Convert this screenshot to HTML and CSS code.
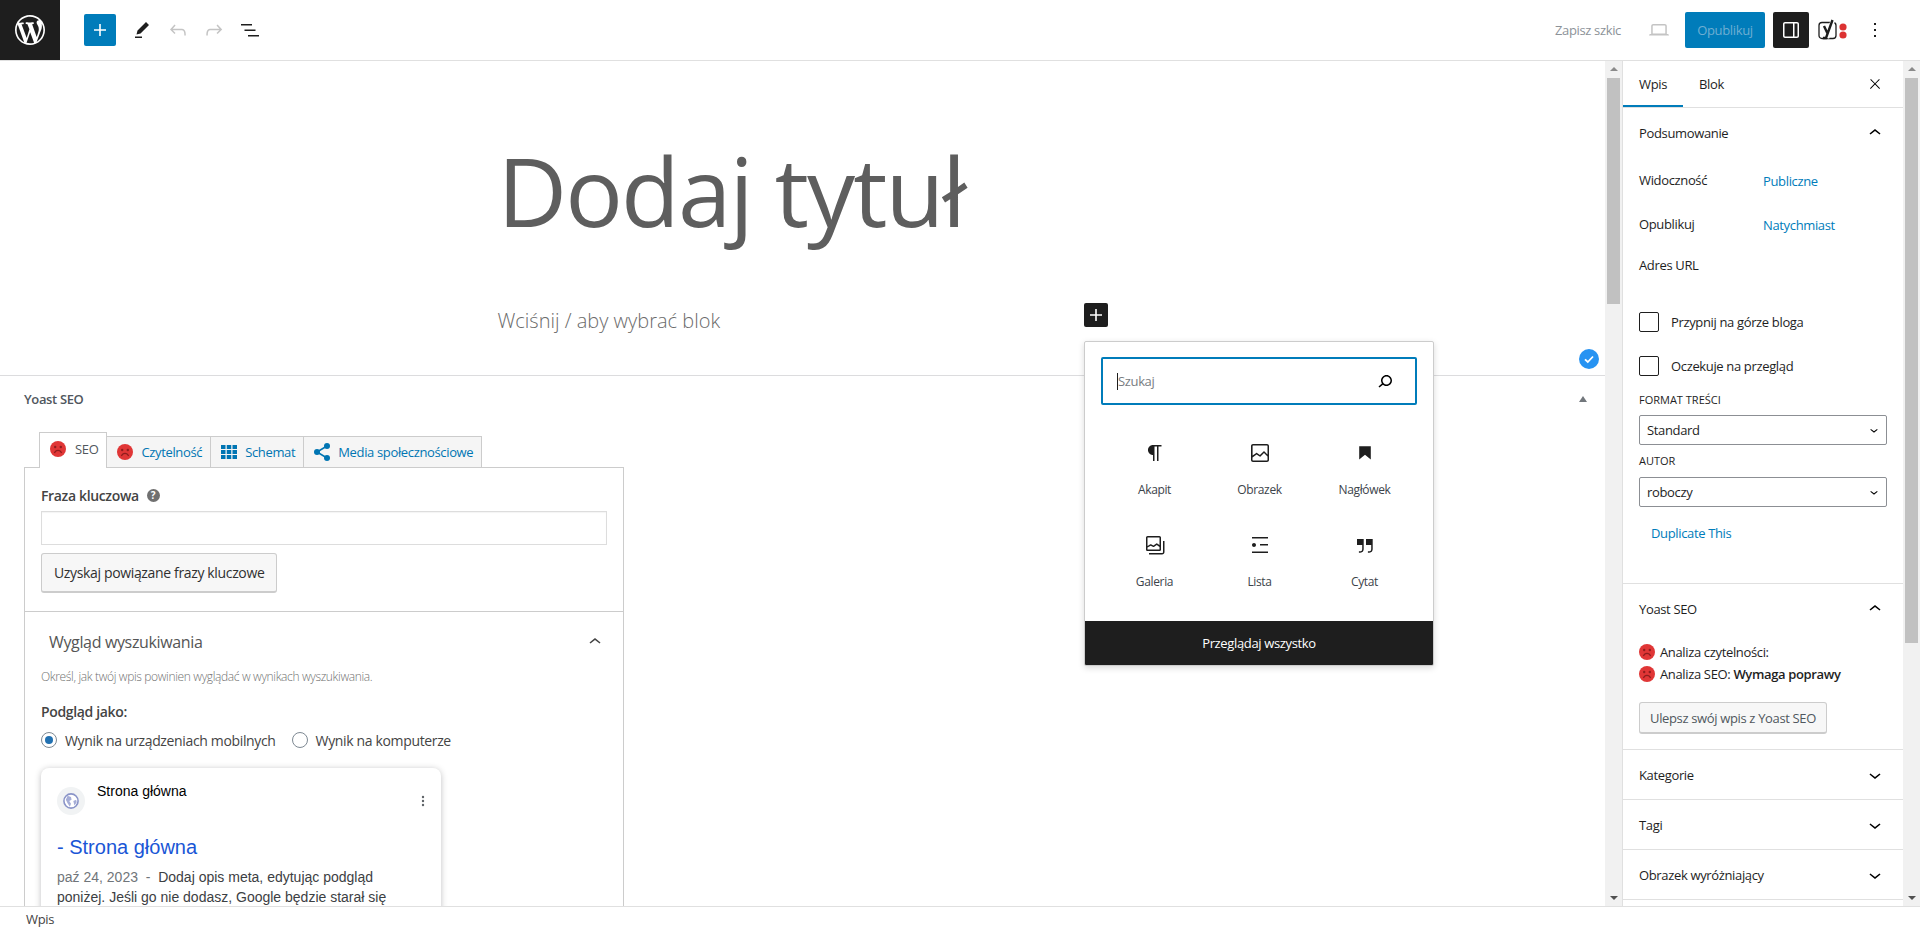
FILE: index.html
```html
<!DOCTYPE html>
<html lang="pl">

<head>
    <meta charset="utf-8">
    <title>Dodaj nowy wpis</title>
    <link rel="stylesheet" href="styles.css">
</head>

<body>
    <header class="topbar">
        <a class="logo">
            <svg width="36" height="36" viewBox="-2 -2 24 24" fill="#fff"><path d="M20 10c0-5.51-4.49-10-10-10C4.48 0 0 4.49 0 10c0 5.52 4.48 10 10 10 5.51 0 10-4.48 10-10zM7.78 15.37L4.37 6.22c.55-.02 1.17-.08 1.17-.08.5-.06.44-1.13-.06-1.11 0 0-1.45.11-2.37.11-.18 0-.37 0-.58-.01C4.12 2.69 6.87 1.11 10 1.11c2.33 0 4.45.87 6.05 2.34-.68-.11-1.65.39-1.65 1.58 0 .74.45 1.36.9 2.1.35.61.55 1.36.55 2.46 0 1.49-1.4 5-1.4 5l-3.03-8.37c.54-.02.82-.17.82-.17.5-.05.44-1.25-.06-1.22 0 0-1.44.12-2.38.12-.87 0-2.33-.12-2.33-.12-.5-.03-.56 1.2-.06 1.22l.92.08 1.26 3.41zM17.41 10c.24-.64.74-1.87.43-4.25.7 1.29 1.05 2.71 1.05 4.25 0 3.29-1.73 6.24-4.4 7.78.97-2.59 1.94-5.2 2.92-7.78zM6.1 18.09C3.12 16.65 1.11 13.53 1.11 10c0-1.3.23-2.48.72-3.59C3.25 10.3 4.67 14.2 6.1 18.09zm4.03-6.63l2.58 6.98c-.86.29-1.76.45-2.71.45-.79 0-1.57-.11-2.29-.33.81-2.38 1.62-4.74 2.42-7.1z"/></svg>
        </a>
        <div class="tools">
            <a class="btn-add"><svg width="24" height="24" viewBox="0 0 24 24" fill="#fff"><path d="M18 11.2h-5.2V6h-1.6v5.2H6v1.6h5.2V18h1.6v-5.2H18z"/></svg></a>
            <a class="tool"><svg width="24" height="24" viewBox="0 0 24 24"><path d="m19 7-3-3-8.500 8.500-1 4 4-1L19 7Zm-7 11.500H5V20h7v-1.500Z"/></svg></a>
            <a class="tool off"><svg width="24" height="24" viewBox="0 0 24 24"><path d="M18.3 11.7c-.6-.6-1.4-.9-2.3-.9H6.7l2.9-3.3-1.1-1-4.500 5L8.500 16l1-1-2.700-2.700H16c.5 0 .9.2 1.3.5 1 1 1 3.400 1 4.500v.3h1.500v-.2c0-1.500 0-4.300-1.500-5.700z"/></svg></a>
            <a class="tool off"><svg width="24" height="24" viewBox="0 0 24 24"><path d="M15.6 6.500l-1.100 1 2.900 3.300H8c-.9 0-1.700.3-2.300.9-1.400 1.500-1.400 4.200-1.400 5.600v.2h1.500v-.3c0-1.100 0-3.500 1-4.500.3-.3.7-.5 1.300-.5h9.200L14.500 15l1.100 1.100 4.600-4.600-4.600-5z"/></svg></a>
            <a class="tool"><svg width="24" height="24" viewBox="0 0 24 24"><path d="M3 6h11v1.500H3V6zm3.500 5.500h11V13h-11v-1.500zM21 17H10v1.500h11V17z"/></svg></a>
        </div>
        <div class="actions">
            <span class="save-draft">Zapisz szkic</span>
            <a class="tool off preview"><svg width="24" height="24" viewBox="0 0 24 24"><path d="M20.500 16h-.7V8c0-1.100-.9-2-2-2H6.200c-1.100 0-2 .9-2 2v8h-.7c-.8 0-1.500.7-1.500 1.500h20c0-.8-.7-1.500-1.500-1.500zM5.700 8c0-.3.2-.5.5-.5h11.600c.3 0 .5.2.5.5v7.600H5.700V8z"/></svg></a>
            <a class="btn-publish">Opublikuj</a>
            <a class="btn-panel"><svg width="24" height="24" viewBox="0 0 24 24" fill="#fff"><path fill-rule="evenodd" d="M18 4H6c-1.100 0-2 .9-2 2v12c0 1.100.9 2 2 2h12c1.100 0 2-.9 2-2V6c0-1.100-.9-2-2-2zm-4 14.500H6c-.3 0-.5-.2-.5-.5V6c0-.3.2-.5.5-.5h8v13zm4.500-.5c0 .3-.2.5-.5.5h-2.500v-13H18c.3 0 .5.2.5.5v12z"/></svg></a>
            <a class="yoast-logo">
                <svg width="30" height="24" viewBox="0 0 30 24">
                    <rect x="1" y="4.500" width="17" height="16" rx="3" fill="none" stroke="#1e1e1e" stroke-width="1.300"/>
                    <path d="M6 8l3.300 7M15 2l-6 18" fill="none" stroke="#fff" stroke-width="4.500"/>
                    <path d="M6 8l3.300 7M14.500 2L8 20H5" fill="none" stroke="#1e1e1e" stroke-width="2.400"/>
                    <circle cx="25" cy="9" r="3.600" fill="#dc3232"/>
                    <circle cx="25" cy="17" r="3.600" fill="#dc3232"/>
                </svg>
            </a>
            <a class="tool more"><svg width="24" height="24" viewBox="0 0 24 24"><path d="M13 19h-2v-2h2v2zm0-6h-2v-2h2v2zm0-6h-2V5h2v2z"/></svg></a>
        </div>
    </header>

    <main class="workspace">
        <section class="editor">
            <div class="canvas">
                <div class="canvas-inner">
                    <h1 class="post-title">Dodaj tytuł</h1>
                    <div class="placeholder-row">
                        <p class="placeholder">Wciśnij / aby wybrać blok</p>
                        <a class="btn-inline-add"><svg width="24" height="24" viewBox="0 0 24 24" fill="#fff"><path d="M18 11.2h-5.200V6h-1.600v5.200H6v1.600h5.200V18h1.600v-5.200H18z"/></svg></a>
                    </div>
                </div>
            </div>

            <div class="metabox">
                <div class="metabox-head">
                    <span>Yoast SEO</span>
                    <i class="caret-up"></i>
                </div>
                <div class="yoast-tabs">
                    <a class="ytab active">
                        <svg class="face" viewBox="0 0 20 20"><use href="#sad"/></svg>SEO
                    </a>
                    <a class="ytab">
                        <svg class="face" viewBox="0 0 20 20"><use href="#sad"/></svg>Czytelność
                    </a>
                    <a class="ytab">
                        <svg width="16" height="16" viewBox="0 0 16 16" fill="#0075b3"><path d="M0 1h4.500v4H0zM5.750 1h4.500v4h-4.500zM11.500 1H16v4h-4.500zM0 6h4.500v4H0zM5.750 6h4.500v4h-4.500zM11.500 6H16v4h-4.500zM0 11h4.500v4H0zM5.750 11h4.500v4h-4.500zM11.500 11H16v4h-4.500z"/></svg>Schemat
                    </a>
                    <a class="ytab">
                        <svg width="16" height="18" viewBox="0 0 16 18" fill="#0075b3"><circle cx="3" cy="9" r="3"/><circle cx="13" cy="3" r="3"/><circle cx="13" cy="15" r="3"/><path d="M3 9l10-6M3 9l10 6" stroke="#0075b3" stroke-width="1.500"/></svg>Media społecznościowe
                    </a>
                </div>
                <div class="yoast-panel">
                    <div class="keyphrase">
                        <label class="keyphrase-label">Fraza kluczowa <span class="help">?</span></label>
                        <div class="fake-input"></div>
                        <a class="btn-grey btn-related">Uzyskaj powiązane frazy kluczowe</a>
                    </div>
                    <div class="appearance">
                        <div class="appearance-head">
                            <span>Wygląd wyszukiwania</span>
                            <svg width="24" height="24" viewBox="0 0 24 24" fill="#444"><path d="M6.500 12.400L12 8l5.500 4.400-.9 1.200L12 10l-4.500 3.600-1-1.200z"/></svg>
                        </div>
                        <p class="hint">Określ, jak twój wpis powinien wyglądać w wynikach wyszukiwania.</p>
                        <p class="preview-label">Podgląd jako:</p>
                        <div class="radios">
                            <span class="radio checked"></span><span class="radio-text">Wynik na urządzeniach mobilnych</span>
                            <span class="radio"></span><span class="radio-text">Wynik na komputerze</span>
                        </div>
                        <div class="serp">
                            <div class="serp-top">
                                <span class="favicon">
                                    <svg width="16" height="16" viewBox="0 0 14 14"><circle cx="7" cy="7" r="6.200" fill="#fff" stroke="#8a94c8" stroke-width="1.400"/><path d="M4 2.500l3 1 .5 2.500-2 1 1.500 2.500-1 2.500-2-3-1.500-3zM9 7l2.500-1 .5 2-2 3z" fill="#a5add6"/></svg>
                                </span>
                                <span class="serp-site">Strona główna</span>
                                <svg class="serp-more" width="4" height="12" viewBox="0 0 4 12" fill="#5f6368"><circle cx="2" cy="2" r="1.200"/><circle cx="2" cy="6" r="1.200"/><circle cx="2" cy="10" r="1.200"/></svg>
                            </div>
                            <div class="serp-title">- Strona główna</div>
                            <div class="serp-desc"><span class="serp-date">paź 24, 2023 &nbsp;-&nbsp; </span>Dodaj opis meta, edytując podgląd poniżej. Jeśli go nie dodasz, Google będzie starał się</div>
                        </div>
                    </div>
                </div>
            </div>

            <a class="check-badge"><svg width="20" height="20" viewBox="0 0 20 20"><circle cx="10" cy="10" r="10" fill="#2793f2"/><path d="M6 10.300l2.800 2.700L14 7.500" fill="none" stroke="#fff" stroke-width="1.800"/></svg></a>

            <div class="inserter">
                <div class="inserter-search">
                    <span class="inserter-placeholder">Szukaj</span>
                    <svg width="24" height="24" viewBox="0 0 24 24"><path d="M13.500 6C10.500 6 8 8.500 8 11.500c0 1.100.3 2.100.9 3l-3.400 3 1 1.100 3.400-2.900c1 .9 2.200 1.400 3.600 1.400 3 0 5.500-2.500 5.500-5.500C19 8.500 16.500 6 13.500 6zm0 9.500c-2.200 0-4-1.800-4-4s1.800-4 4-4 4 1.800 4 4-1.800 4-4 4z"/></svg>
                </div>
                <div class="inserter-grid">
                    <a class="block-item"><svg width="24" height="24" viewBox="0 0 24 24"><path d="m9.996 14v-.225l.004.0001v6.225h1.500v-14.500h2.500v14.500h1.500v-14.500h3v-1.500h-8.504c-2.761 0-5 2.239-5 5 0 2.761 2.239 5 5 5z"/></svg><span>Akapit</span></a>
                    <a class="block-item"><svg width="24" height="24" viewBox="0 0 24 24"><path d="M19 3H5c-1.100 0-2 .9-2 2v14c0 1.100.9 2 2 2h14c1.100 0 2-.9 2-2V5c0-1.100-.9-2-2-2zM5 4.500h14c.3 0 .5.2.5.5v8.400l-3-2.900c-.3-.3-.8-.3-1 0L11.900 14 9 12c-.3-.2-.6-.2-.8 0l-3.600 2.600V5c-.1-.3.1-.5.4-.5zm14 15H5c-.3 0-.5-.2-.5-.5v-2.400l4.100-3 3 1.900c.3.2.7.2.9-.1L16 12l3.500 3.400V19c0 .3-.2.5-.5.5z"/></svg><span>Obrazek</span></a>
                    <a class="block-item"><svg width="24" height="24" viewBox="0 0 24 24"><path d="M6.200 5.200v13.400l5.800-4.800 5.800 4.800V5.200z"/></svg><span>Nagłówek</span></a>
                    <a class="block-item"><svg width="24" height="24" viewBox="0 0 24 24"><path fill-rule="evenodd" d="M16.375 4.500H4.625a.125.125 0 0 0-.125.125v8.254l2.859-1.540a.75.75 0 0 1 .68-.016l2.384 1.142 2.890-2.074a.75.75 0 0 1 .874 0l2.313 1.660V4.625a.125.125 0 0 0-.125-.125zm.125 9.398-2.750-1.975-2.813 2.020a.75.75 0 0 1-.76.067l-2.444-1.170L4.500 14.583v1.792c0 .069.056.125.125.125h11.750a.125.125 0 0 0 .125-.125v-2.477zM4.625 3C3.728 3 3 3.728 3 4.625v11.750C3 17.273 3.728 18 4.625 18h11.750c.898 0 1.625-.727 1.625-1.625V4.625C18 3.728 17.273 3 16.375 3H4.625zM20 8v11c0 .69-.31 1-.999 1H6v1.500h13.001c1.520 0 2.499-.982 2.499-2.500V8H20z"/></svg><span>Galeria</span></a>
                    <a class="block-item"><svg width="24" height="24" viewBox="0 0 24 24"><path d="M4 4v1.500h16V4H4zm8 8.500h8V11h-8v1.500zM4 20h16v-1.500H4V20zm4-8c0-1.100-.9-2-2-2s-2 .9-2 2 .9 2 2 2 2-.9 2-2z"/></svg><span>Lista</span></a>
                    <a class="block-item"><svg width="24" height="24" viewBox="0 0 24 24"><path d="M13 6v6h5.200v4c0 .8-.2 1.400-.5 1.700-.6.6-1.600.6-2.500.5h-.3v1.500h.5c1 0 2.300-.1 3.300-1 .6-.6 1-1.600 1-2.800V6H13zm-9 6h5.200v4c0 .8-.2 1.400-.5 1.700-.6.6-1.600.6-2.500.5h-.3v1.500h.5c1 0 2.300-.1 3.300-1 .6-.6 1-1.600 1-2.800V6H4v6z"/></svg><span>Cytat</span></a>
                </div>
                <a class="inserter-all">Przeglądaj wszystko</a>
            </div>
        </section>

        <div class="scrollbar">
            <i class="arrow-up"></i>
            <div class="thumb thumb-editor"></div>
            <i class="arrow-down"></i>
        </div>

        <aside class="sidebar">
            <div class="side-tabs">
                <a class="side-tab active">Wpis</a>
                <a class="side-tab">Blok</a>
                <a class="side-close"><svg width="16" height="16" viewBox="0 0 24 24"><path d="M13 11.800l6.100-6.300-1-1-6.100 6.200-6.100-6.200-1 1 6.100 6.300-6.500 6.700 1 1 6.500-6.600 6.500 6.600 1-1z"/></svg></a>
            </div>

            <div class="panel panel-summary">
                <div class="panel-head">Podsumowanie<svg width="24" height="24" viewBox="0 0 24 24"><path d="M6.500 12.400L12 8l5.500 4.400-.9 1.200L12 10l-4.500 3.600-1-1.200z"/></svg></div>
                <div class="summary-row row-vis"><span class="row-label">Widoczność</span><a class="row-link">Publiczne</a></div>
                <div class="summary-row row-pub"><span class="row-label">Opublikuj</span><a class="row-link">Natychmiast</a></div>
                <div class="summary-row row-url"><span class="row-label">Adres URL</span></div>
                <label class="check-row first"><span class="check"></span>Przypnij na górze bloga</label>
                <label class="check-row"><span class="check"></span>Oczekuje na przegląd</label>
                <div class="field-label">FORMAT TREŚCI</div>
                <div class="fake-select">Standard<svg width="16" height="16" viewBox="0 0 24 24"><path d="M17.500 11.600L12 16l-5.500-4.400.9-1.200L12 14l4.500-3.600 1 1.200z"/></svg></div>
                <div class="field-label">AUTOR</div>
                <div class="fake-select author-select">roboczy<svg width="16" height="16" viewBox="0 0 24 24"><path d="M17.500 11.600L12 16l-5.500-4.400.9-1.200L12 14l4.500-3.600 1 1.200z"/></svg></div>
                <a class="duplicate">Duplicate This</a>
            </div>

            <div class="panel panel-yoast">
                <div class="panel-head">Yoast SEO<svg width="24" height="24" viewBox="0 0 24 24"><path d="M6.500 12.400L12 8l5.500 4.400-.9 1.200L12 10l-4.500 3.600-1-1.200z"/></svg></div>
                <div class="analysis first"><svg class="face" viewBox="0 0 20 20"><use href="#sad"/></svg>Analiza czytelności:</div>
                <div class="analysis"><svg class="face" viewBox="0 0 20 20"><use href="#sad"/></svg><span>Analiza SEO: <b>Wymaga poprawy</b></span></div>
                <a class="btn-grey btn-improve">Ulepsz swój wpis z Yoast SEO</a>
            </div>

            <div class="panel panel-closed"><div class="panel-head">Kategorie<svg width="24" height="24" viewBox="0 0 24 24"><path d="M17.500 11.600L12 16l-5.500-4.400.9-1.200L12 14l4.500-3.600 1 1.200z"/></svg></div></div>
            <div class="panel panel-closed"><div class="panel-head">Tagi<svg width="24" height="24" viewBox="0 0 24 24"><path d="M17.500 11.600L12 16l-5.500-4.400.9-1.200L12 14l4.500-3.600 1 1.200z"/></svg></div></div>
            <div class="panel panel-closed"><div class="panel-head">Obrazek wyróżniający<svg width="24" height="24" viewBox="0 0 24 24"><path d="M17.500 11.600L12 16l-5.500-4.400.9-1.200L12 14l4.500-3.600 1 1.200z"/></svg></div></div>
        </aside>

        <div class="scrollbar">
            <i class="arrow-up"></i>
            <div class="thumb thumb-side"></div>
            <i class="arrow-down"></i>
        </div>
    </main>

    <footer class="statusbar">Wpis</footer>

    <svg class="defs" width="0" height="0">
        <symbol id="sad" viewBox="0 0 20 20">
            <circle cx="10" cy="10" r="10" fill="#e03636"/>
            <circle cx="6.500" cy="7.500" r="1.500" fill="#8f1d1d"/>
            <circle cx="13.500" cy="7.500" r="1.500" fill="#8f1d1d"/>
            <path d="M5.500 15c1-2.400 2.700-3.300 4.500-3.300s3.500.9 4.500 3.300" fill="none" stroke="#8f1d1d" stroke-width="1.500"/>
        </symbol>
    </svg>
</body>

</html>
```

FILE: styles.css
```css
* {
    box-sizing: border-box;
}

html,
body {
    height: 100%;
}

body {
    margin: 0;
    display: flex;
    flex-direction: column;
    overflow: hidden;
    font-family: "Open Sans", "Noto Sans", sans-serif;
    font-size: 13px;
    letter-spacing: -0.35px;
    color: #1e1e1e;
    background: #fff;
}

p {
    margin: 0;
}

.defs {
    position: absolute;
}

/* top bar */
.topbar {
    height: 61px;
    flex: none;
    display: flex;
    align-items: center;
    border-bottom: 1px solid #e0e0e0;
}

.logo {
    width: 60px;
    height: 60px;
    display: flex;
    align-items: center;
    justify-content: center;
    background: #1e1e1e;
}

.tools {
    display: flex;
    align-items: center;
    margin-left: 24px;
    gap: 12px;
}

.btn-add {
    width: 32px;
    height: 32px;
    margin-right: 2px;
    display: flex;
    align-items: center;
    justify-content: center;
    background: #007cba;
    border-radius: 2px;
}

.tool {
    width: 24px;
    height: 24px;
    display: block;
    fill: #1e1e1e;
}

.tool.off {
    fill: #c4c4c4;
}

.actions {
    margin-left: auto;
    display: flex;
    align-items: center;
}

.save-draft {
    color: #8c9298;
    margin-right: 26px;
}

.preview {
    margin-right: 14px;
}

.btn-publish {
    width: 80px;
    height: 36px;
    display: flex;
    align-items: center;
    justify-content: center;
    background: #007cba;
    color: #6eaed2;
    border-radius: 2px;
}

.btn-panel {
    width: 36px;
    height: 36px;
    margin-left: 8px;
    display: flex;
    align-items: center;
    justify-content: center;
    background: #1e1e1e;
    border-radius: 2px;
}

.yoast-logo {
    margin-left: 9px;
    height: 24px;
}

.more {
    margin-left: 15px;
    margin-right: 33px;
}

/* main area */
.workspace {
    flex: 1;
    min-height: 0;
    display: flex;
}

.editor {
    position: relative;
    flex: 1;
    min-width: 0;
    overflow: hidden;
}

.canvas {
    height: 315px;
    border-bottom: 1px solid #dcdcde;
}

.canvas-inner {
    width: 610px;
    margin: 0 auto;
    padding-top: 73px;
}

.post-title {
    margin: 0;
    font-size: 96px;
    line-height: 112px;
    font-weight: 400;
    letter-spacing: -1.9px;
    color: #5e5e5e;
    white-space: nowrap;
}

.placeholder-row {
    display: flex;
    align-items: flex-start;
    justify-content: space-between;
    margin-top: 57px;
}

.placeholder {
    margin-top: 4px;
    font-size: 20px;
    line-height: 28px;
    font-weight: 300;
    letter-spacing: 0;
    color: #6b6b6b;
}

.btn-inline-add {
    width: 24px;
    height: 24px;
    background: #1e1e1e;
    border-radius: 2px;
    display: block;
}

.check-badge {
    position: absolute;
    left: 1579px;
    top: 288px;
    height: 20px;
}

/* yoast metabox */
.metabox-head {
    height: 46px;
    padding: 0 18px 0 24px;
    display: flex;
    align-items: center;
    justify-content: space-between;
    font-weight: 600;
    color: #50575e;
}

.caret-up {
    width: 0;
    height: 0;
    border-left: 4px solid transparent;
    border-right: 4px solid transparent;
    border-bottom: 6px solid #72777c;
}

.yoast-tabs {
    display: flex;
    align-items: flex-end;
    margin: 10px 0 0 39px;
    height: 35px;
    position: relative;
    z-index: 1;
}

.ytab {
    height: 31px;
    padding: 0 8px 0 10px;
    display: flex;
    align-items: center;
    gap: 8px;
    background: #f5f5f5;
    border: 1px solid #ccc;
    border-left: 0;
    border-bottom: 0;
    color: #0075b3;
    white-space: nowrap;
}

.ytab.active {
    height: 36px;
    padding: 0 8px 3px 10px;
    gap: 9px;
    margin-bottom: -1px;
    border-left: 1px solid #ccc;
    background: #fff;
    color: #50575e;
}

.face {
    width: 16px;
    height: 16px;
    flex: none;
}

.yoast-panel {
    width: 600px;
    margin-left: 24px;
    border: 1px solid #ccc;
    font-size: 14px;
}

.keyphrase {
    height: 144px;
    padding: 17px 16px 0;
    border-bottom: 1px solid #ccc;
}

.keyphrase-label {
    display: flex;
    align-items: center;
    gap: 8px;
    height: 20px;
    font-weight: 600;
    color: #444;
}

.help {
    width: 13px;
    height: 13px;
    border-radius: 50%;
    background: #707070;
    color: #fff;
    font-size: 10px;
    font-weight: 700;
    line-height: 13px;
    text-align: center;
    letter-spacing: 0;
}

.fake-input {
    width: 566px;
    height: 34px;
    margin-top: 6px;
    border: 1px solid #ddd;
    box-shadow: inset 0 1px 1px #f4f4f4;
}

.btn-grey {
    display: inline-flex;
    align-items: center;
    background: #f7f7f7;
    border: 1px solid #ccc;
    border-bottom-width: 2px;
    border-radius: 3px;
    color: #303030;
    white-space: nowrap;
}

.btn-related {
    height: 40px;
    margin-top: 8px;
    padding: 0 12px;
}

.appearance {
    padding: 0 16px;
}

.appearance-head {
    height: 60px;
    padding-left: 8px;
    display: flex;
    align-items: center;
    justify-content: space-between;
    font-size: 16px;
    font-weight: 400;
    color: #555;
}

.hint {
    margin-top: -3px;
    font-size: 12px;
    line-height: 16px;
    font-weight: 300;
    color: #707070;
}

.preview-label {
    margin-top: 17px;
    line-height: 19px;
    font-weight: 600;
    color: #444;
}

.radios {
    display: flex;
    align-items: center;
    margin-top: 9px;
    height: 20px;
    color: #444;
}

.radio {
    width: 16px;
    height: 16px;
    margin-right: 8px;
    border-radius: 50%;
    border: 1px solid #7e8993;
    background: #fff;
    flex: none;
    position: relative;
}

.radio.checked::after {
    content: "";
    position: absolute;
    inset: 3px;
    border-radius: 50%;
    background: #2271b1;
}

.radio-text {
    margin-right: 16px;
}

.serp {
    width: 400px;
    height: 200px;
    margin-top: 18px;
    padding: 0 16px;
    background: #fff;
    border-radius: 8px;
    box-shadow: 0 1px 6px rgba(32, 33, 36, 0.28);
    font-family: "Liberation Sans", Arial, sans-serif;
    letter-spacing: 0;
    overflow: hidden;
}

.serp-top {
    display: flex;
    align-items: flex-start;
    height: 66px;
    padding-top: 15px;
}

.favicon {
    width: 28px;
    height: 28px;
    margin-top: 4px;
    background: #f1f3f4;
    border-radius: 50%;
    display: flex;
    align-items: center;
    justify-content: center;
    flex: none;
}

.serp-site {
    margin-left: 12px;
    font-size: 14px;
    line-height: 16px;
    color: #000;
}

.serp-more {
    margin-left: auto;
    margin-top: 12px;
}

.serp-title {
    font-size: 20px;
    line-height: 26px;
    color: #1a56d6;
}

.serp-desc {
    margin-top: 7px;
    width: 340px;
    font-size: 14px;
    line-height: 20px;
    color: #3c4043;
}

.serp-date {
    color: #70757a;
}

/* block inserter popover */
.inserter {
    position: absolute;
    left: 1084px;
    top: 280px;
    width: 350px;
    height: 325px;
    background: #fff;
    border: 1px solid #ccc;
    border-radius: 2px;
    box-shadow: 0 2px 6px rgba(0, 0, 0, 0.15);
    display: flex;
    flex-direction: column;
    overflow: hidden;
}

.inserter-search {
    height: 48px;
    flex: none;
    margin: 15px 16px 0;
    padding: 0 18px 0 14px;
    display: flex;
    align-items: center;
    justify-content: space-between;
    border: 2px solid #007cba;
    border-radius: 2px;
}

.inserter-placeholder {
    border-left: 1px solid #1e1e1e;
    color: #787c82;
    line-height: 17px;
}

.inserter-grid {
    flex: 1;
    min-height: 0;
    display: grid;
    grid-template-columns: repeat(3, 105px);
    grid-auto-rows: 92px;
    padding: 36px 17px 0;
}

.block-item {
    display: flex;
    flex-direction: column;
    align-items: center;
    gap: 16px;
    font-size: 12px;
    color: #3c434a;
}

.block-item svg {
    fill: #1e1e1e;
}

.inserter-all {
    height: 44px;
    flex: none;
    display: flex;
    align-items: center;
    justify-content: center;
    background: #1e1e1e;
    color: #fff;
    font-weight: 500;
}

/* fake scrollbars */
.scrollbar {
    width: 17px;
    flex: none;
    display: flex;
    flex-direction: column;
    align-items: center;
    background: #f1f1f1;
    padding: 6px 0;
}

.arrow-up,
.arrow-down {
    width: 0;
    height: 0;
    flex: none;
    border-left: 4px solid transparent;
    border-right: 4px solid transparent;
}

.arrow-up {
    border-bottom: 4px solid #8a8a8a;
}

.arrow-down {
    margin-top: auto;
    border-top: 4px solid #505050;
}

.thumb {
    width: 13px;
    margin-top: 7px;
    background: #c1c1c1;
}

.thumb-editor {
    height: 226px;
}

.thumb-side {
    height: 565px;
}

/* sidebar */
.sidebar {
    width: 281px;
    flex: none;
    border-left: 1px solid #e0e0e0;
    overflow: hidden;
}

.side-tabs {
    height: 47px;
    display: flex;
    align-items: stretch;
    border-bottom: 1px solid #e0e0e0;
}

.side-tab {
    padding: 0 16px;
    display: flex;
    align-items: center;
    color: #1e1e1e;
    font-weight: 500;
}

.side-tab.active {
    box-shadow: inset 0 -2px 0 #007cba;
}

.side-close {
    width: 16px;
    height: 16px;
    margin: 15px 20px 0 auto;
}

.panel {
    border-bottom: 1px solid #e0e0e0;
}

.panel-head {
    height: 50px;
    padding: 0 16px;
    display: flex;
    align-items: center;
    justify-content: space-between;
    font-weight: 500;
    color: #1e1e1e;
}

.panel-summary {
    height: 476px;
}

.summary-row {
    display: flex;
    align-items: center;
    padding-left: 16px;
    height: 20px;
}

.row-vis {
    margin-top: 13px;
}

.row-pub {
    margin-top: 24px;
}

.row-url {
    margin-top: 21px;
}

.row-label {
    width: 124px;
    position: relative;
    top: -1px;
}

.row-link,
.duplicate {
    color: #007cba;
}

.check-row {
    display: flex;
    align-items: center;
    gap: 12px;
    margin: 24px 0 0 16px;
    height: 20px;
}

.check-row.first {
    margin-top: 36px;
}

.check {
    width: 20px;
    height: 20px;
    border: 1px solid #1e1e1e;
    border-radius: 2px;
}

.field-label {
    margin: 16px 0 0 16px;
    font-size: 11px;
    font-weight: 500;
    line-height: 16px;
    letter-spacing: 0;
}

.field-label + .fake-select {
    margin-top: 7px;
}

.field-label + .author-select {
    margin-top: 8px;
}

.fake-select {
    width: 248px;
    height: 30px;
    margin-left: 16px;
    padding: 0 4px 0 7px;
    display: flex;
    align-items: center;
    justify-content: space-between;
    border: 1px solid #8c8f94;
    border-radius: 2px;
    color: #1e1e1e;
}

.fake-select + .field-label {
    margin-top: 8px;
}

.duplicate {
    display: block;
    margin: 17px 0 0 28px;
    line-height: 18px;
}

.panel-yoast {
    height: 166px;
}

.analysis {
    display: flex;
    align-items: center;
    gap: 5px;
    height: 22px;
    margin-left: 16px;
}

.analysis.first {
    margin-top: 7px;
}

.analysis b {
    font-weight: 600;
}

.btn-improve {
    height: 32px;
    margin: 17px 0 0 16px;
    padding: 0 10px;
    color: #50575e;
}

.panel-closed {
    height: 50px;
}

.statusbar {
    height: 25px;
    flex: none;
    padding-left: 26px;
    display: flex;
    align-items: center;
    border-top: 1px solid #e0e0e0;
    color: #444;
}
```
